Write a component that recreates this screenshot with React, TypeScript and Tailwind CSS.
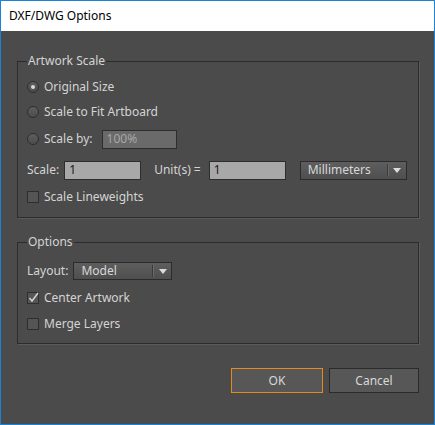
import React from 'react';

const font = { fontFamily: '"Noto Sans", "Open Sans", sans-serif' };

const Radio: React.FC<{ checked?: boolean; label: string }> = ({ checked, label }) => (
  <label className="flex items-center h-[20px]">
    <span className="w-[12px] h-[12px] rounded-full border border-[#2e2e2e] bg-gradient-to-b from-[#5e5e5e] to-[#4c4c4c] flex items-center justify-center">
      {checked && <span className="w-[4px] h-[4px] rounded-full bg-[#d8d8d8]" />}
    </span>
    <span className="ml-[5px] text-[12px] text-[#d4d4d4]">{label}</span>
  </label>
);

const Checkbox: React.FC<{ checked?: boolean; label: string }> = ({ checked, label }) => (
  <label className="flex items-center h-[20px]">
    <span className="relative w-[12px] h-[12px] border border-[#2e2e2e] bg-[#555555]">
      {checked && (
        <svg className="absolute -left-[1px] -top-[2px]" width="13" height="13" viewBox="0 0 13 13">
          <path d="M2.5 7 L5 10 L11 2" fill="none" stroke="#d6d6d6" strokeWidth="1.4" />
        </svg>
      )}
    </span>
    <span className="ml-[5px] text-[12px] text-[#d4d4d4]">{label}</span>
  </label>
);

const Dropdown: React.FC<{ value: string; className: string }> = ({ value, className }) => (
  <div className={`flex items-center border border-[#2b2b2b] bg-gradient-to-b from-[#5e5e5e] to-[#4f4f4f] ${className}`}>
    <span className="flex-1 pl-[7px] text-[12px] text-[#d8d8d8]">{value}</span>
    <span className="w-[1px] h-[12px] bg-[#3a3a3a]" />
    <span className="w-[1px] h-[12px] bg-[#6a6a6a]" />
    <span className="w-[17px] flex justify-center">
      <svg width="8" height="5" viewBox="0 0 8 5">
        <path d="M0 0 H8 L4 5 Z" fill="#dcdcdc" />
      </svg>
    </span>
  </div>
);

const Group: React.FC<{ title: string; className?: string; children: React.ReactNode }> = ({ title, className, children }) => (
  <fieldset className={`w-[402px] border border-[#2c2c2c] shadow-[1px_1px_0_#5a5a5a] pl-[9px] ${className ?? ''}`}>
    <legend className="px-[1px] h-[16px] leading-[16px] text-[12px] text-[#d4d4d4]">{title}</legend>
    {children}
  </fieldset>
);

export default function App() {
  return (
    <div className="w-[435px] h-[425px] border border-[#1883d7] flex flex-col" style={font}>
      <div className="h-[30px] bg-white flex items-center pl-[8px] text-[12px] text-black">DXF/DWG Options</div>
      <div className="flex-1 bg-[#4b4b4b] pl-[16px] pr-[15px] pt-[22px]">
        <Group title="Artwork Scale" className="pb-[10px]">
          <div className="flex flex-col">
            <div className="mt-[8px]"><Radio checked label="Original Size" /></div>
            <div className="mt-[5px]"><Radio label="Scale to Fit Artboard" /></div>
            <div className="mt-[7px] flex items-center h-[20px]">
              <Radio label="Scale by:" />
              <div className="ml-[9px] w-[75px] h-[19px] border border-[#2d2d2d] bg-[#6a6a6a] flex items-center pl-[4px] text-[12px] text-[#a8a8a8]">100%</div>
            </div>
            <div className="mt-[11px] flex items-center h-[20px] text-[12px] text-[#d4d4d4]">
              <span>Scale:</span>
              <div className="ml-[5px] w-[77px] h-[19px] border border-[#2d2d2d] bg-[#a8a8a8] flex items-center pl-[4px] text-[#1a1a1a]">1</div>
              <span className="ml-[13px]">Unit(s) =</span>
              <div className="ml-[8px] w-[77px] h-[19px] border border-[#2d2d2d] bg-[#a8a8a8] flex items-center pl-[4px] text-[#1a1a1a]">1</div>
              <Dropdown value="Millimeters" className="ml-[14px] w-[107px] h-[19px]" />
            </div>
            <div className="mt-[7px]"><Checkbox label="Scale Lineweights" /></div>
          </div>
        </Group>
        <Group title="Options" className="mt-[16px] pb-[9px]">
          <div className="flex flex-col">
            <div className="mt-[11px] flex items-center h-[20px] text-[12px] text-[#d4d4d4]">
              <span>Layout:</span>
              <Dropdown value="Model" className="ml-[5px] w-[99px] h-[18px]" />
            </div>
            <div className="mt-[7px]"><Checkbox checked label="Center Artwork" /></div>
            <div className="mt-[6px]"><Checkbox label="Merge Layers" /></div>
          </div>
        </Group>
        <div className="mt-[24px] flex justify-end gap-[6px] w-[402px]">
          <button className="w-[92px] h-[25px] border border-[#e8891d] bg-[#575757] text-[12px] text-[#d8d8d8]">OK</button>
          <button className="w-[90px] h-[25px] border border-[#2b2b2b] bg-[#575757] text-[12px] text-[#d8d8d8]">Cancel</button>
        </div>
      </div>
    </div>
  );
}
